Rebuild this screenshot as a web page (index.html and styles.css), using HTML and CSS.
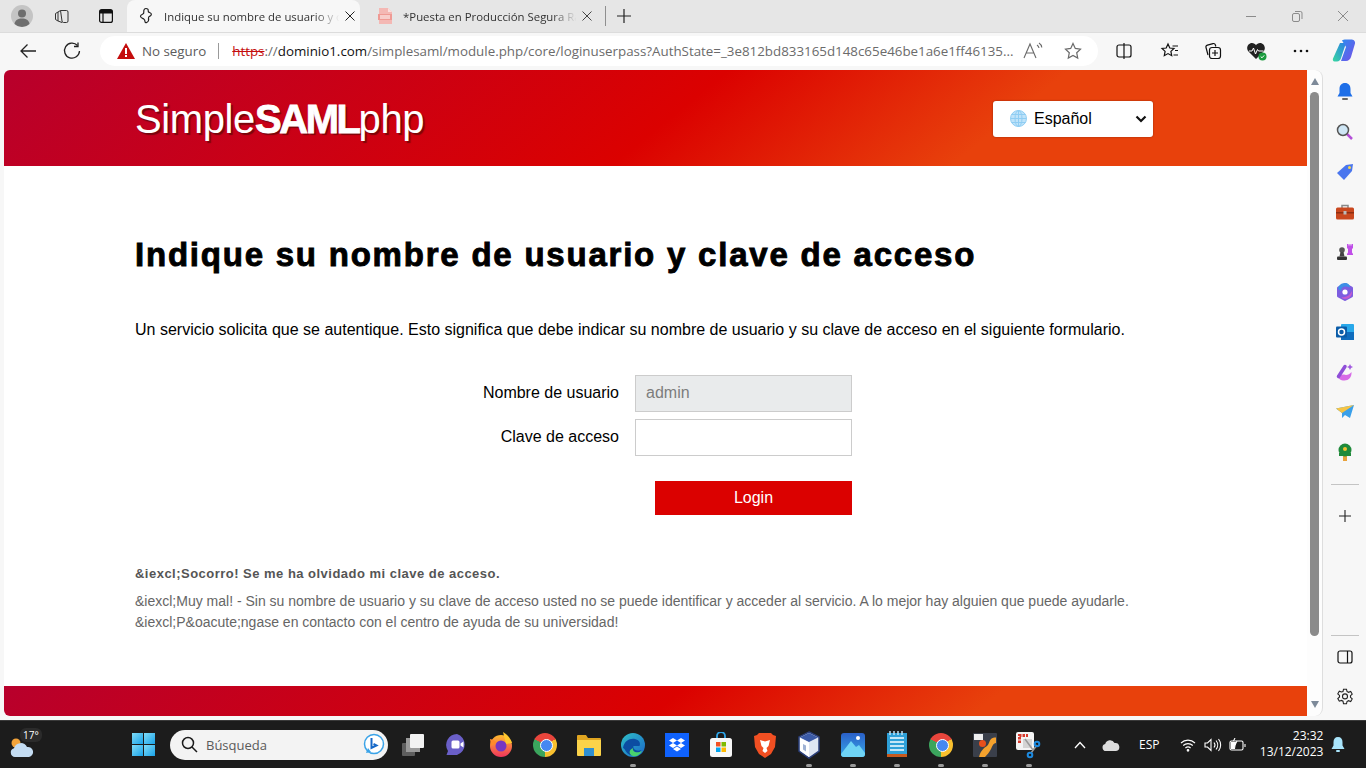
FILE: index.html
```html
<!DOCTYPE html>
<html lang="es">

<head>
    <meta charset="UTF-8">
    <title>Indique su nombre de usuario y clave de acceso</title>
    <link rel="stylesheet" href="styles.css">
</head>

<body>

    <!-- tab strip -->
    <div class="tabstrip">
        <div class="avatar"><svg width="22" height="22" viewBox="0 0 22 22"><circle cx="11" cy="11" r="11" fill="#c4c4c4"/><circle cx="11" cy="8.5" r="4" fill="#6e6e6e"/><path d="M3.5 19c.6-4 3.500-5.500 7.500-5.500s6.900 1.500 7.500 5.500a11 11 0 0 1-15 0z" fill="#6e6e6e"/></svg></div>
        <div class="strip-btn"><svg width="18" height="18" viewBox="0 0 18 18" fill="none" stroke="#333"><path d="M7.500 3.500h6a1.500 1.500 0 0 1 1.500 1.500v9a1.500 1.500 0 0 1-1.500 1.500h-3a1.500 1.500 0 0 1-1.500-1.500z"/><path d="M7.500 3.500 5 5v9l4 1.500M5 5 2.500 6.500v6L5 14"/></svg></div>
        <div class="strip-btn"><svg width="16" height="16" viewBox="0 0 16 16" fill="none" stroke="#111" stroke-width="1.200"><rect x="1.600" y="1.600" width="12.800" height="12.800" rx="2"/><path d="M1.600 5h12.800M5 5v9.400" /><rect x="2" y="2" width="12" height="3" fill="#111" stroke="none"/></svg></div>
        <div class="tab tab-active">
            <svg width="16" height="18" viewBox="0 0 16 18" fill="none" stroke="#222" stroke-width="1.200"><path d="M8 1.500c1.500 0 2.500 1 2.200 2.500-.2 1 .8 1.500 1.800 1.800 1.500.5 1.800 2.200.5 3-1 .6-2.300.9-2 2.200.4 1.700.2 3.500-1.800 4.500-1 .5-1.700 0-1.700-1 0-1.300-.5-2-1.500-2.700-1-.6-2.700-.8-3-2.300-.2-1.200 1-1.900 2-2.300 1-.4 1.500-1 1.300-2.200C5.500 3 6.500 1.500 8 1.500z"/></svg>
            <span class="tab-title">Indique su nombre de usuario y c</span>
            <svg class="tab-close" width="10" height="10" viewBox="0 0 10 10" stroke="#222"><path d="M.5.5l9 9M9.500.5l-9 9"/></svg>
        </div>
        <div class="tab tab-pdf">
            <svg width="16" height="18" viewBox="0 0 16 18"><path d="M2 1h9l4 4v12H2z" fill="#f4b8b4"/><path d="M11 1v4h4z" fill="#fbe0de"/><rect x="1" y="7" width="14" height="6" fill="#ef9a94"/><rect x="3" y="8.500" width="10" height="1" fill="#fff"/><rect x="3" y="10.500" width="10" height="1" fill="#fff"/></svg>
            <span class="tab-title">*Puesta en Producción Segura Ra</span>
            <svg class="tab-close" width="10" height="10" viewBox="0 0 10 10" stroke="#444"><path d="M.5.5l9 9M9.500.5l-9 9"/></svg>
        </div>
        <div class="tab-sep"></div>
        <div class="new-tab"><svg width="16" height="16" viewBox="0 0 16 16" stroke="#222" stroke-width="1.200"><path d="M8 1v14M1 8h14"/></svg></div>
        <div class="win-controls">
            <svg width="14" height="14" viewBox="0 0 14 14" stroke="#8b8b8b"><path d="M2 7.500h10"/></svg>
            <svg width="14" height="14" viewBox="0 0 14 14" stroke="#8b8b8b" fill="none"><rect x="2.500" y="4.500" width="7" height="8" rx="1.500"/><path d="M5 2.500h5.500a1.500 1.500 0 0 1 1.500 1.500v6"/></svg>
            <svg width="14" height="14" viewBox="0 0 14 14" stroke="#8b8b8b"><path d="M2 2l10 10M12 2 2 12"/></svg>
        </div>
    </div>

    <!-- address bar -->
    <div class="toolbar">
        <div class="nav-btn"><svg width="20" height="20" viewBox="0 0 20 20" fill="none" stroke="#222" stroke-width="1.300"><path d="M18 10H3M9.500 3.500 3 10l6.500 6.500"/></svg></div>
        <div class="nav-btn"><svg width="20" height="20" viewBox="0 0 20 20" fill="none" stroke="#222" stroke-width="1.300"><path d="M15.500 4.500A7.500 7.500 0 1 0 17.500 10"/><path d="M16 1.500v4h-4"/></svg></div>
        <div class="urlbar">
            <svg class="warn" width="18" height="16" viewBox="0 0 18 16"><path d="M9 0 18 16H0z" fill="#c40d0d"/><rect x="8" y="5" width="2" height="6" fill="#fff"/><rect x="8" y="12" width="2" height="2" fill="#fff"/></svg>
            <span class="not-secure">No seguro</span>
            <span class="url-sep"></span>
            <span class="url"><span class="url-https">https</span>://<span class="url-host">dominio1.com</span>/simplesaml/module.php/core/loginuserpass?AuthState=_3e812bd833165d148c65e46be1a6e1ff46135...</span>
            <svg class="read" width="24" height="20" viewBox="0 0 24 20" fill="none" stroke="#6a6a6a" stroke-width="1.100"><path d="M2 17 8 3l6 14M4.500 12h7"/><path d="M15 4c1.200.8 1.800 1.800 2 3M17 2c1.600 1 2.600 2.600 2.800 4.500"/></svg>
            <svg class="star" width="18" height="18" viewBox="0 0 18 18" fill="none" stroke="#6a6a6a" stroke-width="1.200"><path d="M9 1.500l2.300 4.900 5.200.7-3.800 3.600 1 5.300L9 13.400 4.300 16l1-5.300L1.500 7.100l5.200-.7z"/></svg>
        </div>
        <div class="tool-icons">
            <div class="tool"><svg width="18" height="18" viewBox="0 0 18 18" fill="none" stroke="#111" stroke-width="1.200"><rect x="2" y="3" width="14" height="12" rx="2"/><path d="M9 1v16"/></svg></div>
            <div class="tool"><svg width="20" height="20" viewBox="0 0 20 20" fill="none" stroke="#111" stroke-width="1.200"><path d="M8 3l1.800 4 4.200.5-3.100 2.900.8 4.300L8 12.600l-3.700 2.100.8-4.300L2 7.500 6.200 7z"/><path d="M12.500 5H18M15 9.500h3M13.500 14H18"/></svg></div>
            <div class="tool"><svg width="20" height="20" viewBox="0 0 20 20" fill="none" stroke="#111" stroke-width="1.200"><path d="M5 14 3 6.500a2 2 0 0 1 1.400-2.400L10 2.600a2 2 0 0 1 2.400 1.400l.4 1.500"/><rect x="6.500" y="6.500" width="11" height="11" rx="2.500"/><path d="M12 9v6M9 12h6"/></svg></div>
            <div class="tool"><svg width="22" height="20" viewBox="0 0 22 20"><path d="M10 18 2.500 10.500C-.5 7 2 2 6 2c1.800 0 3.200 1 4 2.200C10.800 3 12.200 2 14 2c4 0 6.500 5 3.500 8.500z" fill="#222"/><path d="M3 10h3l1.500-3 2 6 2-4.500 1 1.500h5" fill="none" stroke="#fff"/><circle cx="16.500" cy="15.500" r="4" fill="#1c9b3f"/><path d="M14.700 15.500l1.300 1.300 2.200-2.400" fill="none" stroke="#fff"/></svg></div>
            <div class="tool"><svg width="16" height="4" viewBox="0 0 16 4" fill="#111"><circle cx="2" cy="2" r="1.300"/><circle cx="8" cy="2" r="1.300"/><circle cx="14" cy="2" r="1.300"/></svg></div>
            <div class="tool"><svg width="24" height="24" viewBox="0 0 24 24"><defs><linearGradient id="cop1" x1="0" y1="1" x2="1" y2="0"><stop offset="0" stop-color="#37d8a0"/><stop offset="1" stop-color="#2a7de8"/></linearGradient><linearGradient id="cop2" x1="0" y1="0" x2="1" y2="1"><stop offset="0" stop-color="#2b8df0"/><stop offset="1" stop-color="#7a4de8"/></linearGradient></defs><path d="M8 1h6l-5 15c-.6 2-2 3.500-4 3.500H2.500C1 19.500.5 18 1 16.500z" fill="url(#cop1)" transform="translate(0 3)"/><path d="M10 1.500C11 .5 12 .5 14 .5h5c2.500 0 4.500 1.500 4 4L19 18c-.6 2-2.500 4-5 4h-5l5-14z" fill="url(#cop2)"/></svg></div>
        </div>
    </div>

    <div class="browser-body">
        <!-- page content -->
        <div class="page">
            <div class="site-header">
                <div class="logo">Simple<b>SAML</b>php</div>
                <div class="lang-select">
                    <svg width="17" height="17" viewBox="0 0 17 17" fill="none" stroke="#8fcdf3"><circle cx="8.500" cy="8.500" r="8" fill="#bfe3f9"/><ellipse cx="8.500" cy="8.500" rx="3.500" ry="8"/><path d="M.5 8.500h16M1.500 4.500h14M1.500 12.500h14M8.500.5v16"/></svg>
                    <span class="lang-name">Español</span>
                    <svg class="chev" width="12" height="8" viewBox="0 0 12 8" fill="none" stroke="#111" stroke-width="2.200"><path d="M1.500 1.500 6 6l4.500-4.500"/></svg>
                </div>
            </div>

            <div class="content">
                <h1>Indique su nombre de usuario y clave de acceso</h1>
                <p class="intro">Un servicio solicita que se autentique. Esto significa que debe indicar su nombre de usuario y su clave de acceso en el siguiente formulario.</p>

                <form class="login-form">
                    <label for="username">Nombre de usuario</label>
                    <input id="username" class="field field-disabled" value="admin" disabled>
                    <label for="password">Clave de acceso</label>
                    <input id="password" class="field" type="password">
                    <button type="button" class="login-btn">Login</button>
                </form>

                <h2>&amp;iexcl;Socorro! Se me ha olvidado mi clave de acceso.</h2>
                <p class="help">&amp;iexcl;Muy mal! - Sin su nombre de usuario y su clave de acceso usted no se puede identificar y acceder al servicio. A lo mejor hay alguien que puede ayudarle. &amp;iexcl;P&amp;oacute;ngase en contacto con el centro de ayuda de su universidad!</p>
            </div>

            <div class="site-footer"></div>
        </div>

        <!-- scrollbar -->
        <div class="scrollbar">
            <span class="arrow arrow-up"></span>
            <div class="thumb"></div>
            <span class="arrow arrow-down"></span>
        </div>

        <!-- edge sidebar -->
        <div class="sidebar">
            <div class="side-icon"><svg width="18" height="20" viewBox="0 0 18 20"><path d="M9 1c-3.500 0-5.500 2.500-5.500 6v4L1.500 14.500h15L14.500 11V7C14.500 3.500 12.500 1 9 1z" fill="#1e6fe8"/><rect x="6" y="16" width="6" height="2" rx="1" fill="#666"/></svg></div>
            <div class="side-icon"><svg width="18" height="18" viewBox="0 0 18 18"><path d="M10.500 10.500 16 16" stroke="#b44fd8" stroke-width="2.500"/><circle cx="7" cy="7" r="5.500" fill="#cfe6f5" stroke="#555" stroke-width="1.500"/></svg></div>
            <div class="side-icon"><svg width="18" height="18" viewBox="0 0 18 18"><path d="M1 10 10 2l7-1-1 7-8 9z" fill="#4a76ee"/><circle cx="13.500" cy="4.500" r="1.500" fill="#f7d64a"/></svg></div>
            <div class="side-icon"><svg width="18" height="16" viewBox="0 0 18 16"><path d="M6 4V1.500h6V4" fill="none" stroke="#888" stroke-width="1.500"/><rect y="3.500" width="18" height="12" rx="1.500" fill="#c9481f"/><rect y="8" width="18" height="1.500" fill="#8f2f12"/><rect x="7.500" y="7" width="3" height="3.500" fill="#bbb"/></svg></div>
            <div class="side-icon"><svg width="18" height="18" viewBox="0 0 18 18"><circle cx="6" cy="7" r="2.800" fill="#555"/><path d="M4.500 9h3l1 4.500h-5z" fill="#444"/><rect x="1" y="13.500" width="10" height="3.500" rx="1" fill="#333"/><path d="M11 1h1.500v1.500h1V1h1v1.500h1V1H17v4l-1 1v3.500l1 1.500v1h-6v-1l1-1.500V6l-1-1z" fill="#c04fe8"/></svg></div>
            <div class="side-icon"><svg width="18" height="18" viewBox="0 0 18 18"><path d="M9 1.500 15.500 5v8L9 16.500 2.500 13V5z" fill="#7d5de0" stroke="#7d5de0" stroke-linejoin="round" stroke-width="3"/><path d="M9 0c3 0 5 2 5 4.500-2-1-3-1-5-1S5 5 5 8L2 6c0-3 3-6 7-6z" fill="#3d8fe6"/><path d="M16 8c.5 4-2 8-7 8-2 0-3-1-3.500-2 4 1 8-1 10.500-6z" fill="#c45ad0"/><circle cx="9" cy="9" r="2.600" fill="#fff"/></svg></div>
            <div class="side-icon"><svg width="18" height="18" viewBox="0 0 18 18"><rect x="5" y="1" width="13" height="16" rx="1" fill="#28a8ea"/><path d="M5 9h13v8H5z" fill="#0f6cbd"/><rect y="3.500" width="11" height="11" rx="1" fill="#0a5ca8"/><circle cx="5.500" cy="9" r="3" fill="none" stroke="#fff" stroke-width="1.500"/></svg></div>
            <div class="side-icon"><svg width="18" height="18" viewBox="0 0 18 18"><path d="M1.500 12c0 3.500 3 5.500 7 5.500s7.500-3.500 7-8.500c-2 2.500-5 3.500-7.500 2.500z" fill="#d76be6"/><path d="M2.500 13.500 9 3.500" stroke="#8f4fd8" stroke-width="3.500" stroke-linecap="round"/><path d="M14 1l1 2 2 1-2 1-1 2-1-2-2-1 2-1z" fill="#a35be0"/></svg></div>
            <div class="side-icon"><svg width="18" height="14" viewBox="0 0 18 14"><path d="M0 3.500 18 0l-4 13-5-3-3 3V8z" fill="#3aa0ea"/><path d="M0 3.500 18 0 6 8z" fill="#f6c445"/></svg></div>
            <div class="side-icon"><svg width="16" height="18" viewBox="0 0 16 18"><rect x="6" y="11" width="4" height="7" fill="#e9a23b"/><circle cx="8" cy="7" r="6.500" fill="#1f8a3a"/><path d="M2 10h12v3H2z" fill="#1f8a3a"/><circle cx="8" cy="6" r="2" fill="#f2c230"/></svg></div>
            <div class="side-sep side-sep-first"></div>
            <div class="side-icon"><svg width="14" height="14" viewBox="0 0 14 14" stroke="#222" stroke-width="1.100"><path d="M7 1v12M1 7h12"/></svg></div>
            <div class="side-spacer"></div>
            <div class="side-sep side-sep-last"></div>
            <div class="side-icon"><svg width="16" height="14" viewBox="0 0 16 14" fill="none" stroke="#111" stroke-width="1.200"><rect x="1" y="1" width="14" height="12" rx="2"/><path d="M10.500 1v12"/></svg></div>
            <div class="side-icon"><svg width="18" height="18" viewBox="0 0 18 18" fill="none" stroke="#222" stroke-width="1.100"><path d="M7.500 1.200h3l.5 2.300 1.500.8 2.200-.8 1.500 2.600-1.700 1.600v1.600l1.700 1.600-1.500 2.600-2.200-.8-1.500.8-.5 2.300h-3L7 13.200l-1.500-.8-2.200.8-1.500-2.600 1.700-1.600V7.400L1.800 5.800l1.500-2.600 2.200.8L7 3.500z"/><circle cx="9" cy="8.400" r="2.500"/></svg></div>
        </div>
    </div>

    <!-- windows taskbar -->
    <div class="taskbar">
        <div class="weather">
            <svg width="26" height="22" viewBox="0 0 26 22"><circle cx="7" cy="6" r="4.500" fill="#f2a33a"/><path d="M6 20a4.500 4.500 0 0 1-1-8.800A7 7 0 0 1 18 10a5 5 0 0 1 2 10z" fill="#c4dcf2"/></svg>
            <span class="temp">17°</span>
        </div>
        <div class="start"><span></span><span></span><span></span><span></span></div>
        <div class="search">
            <svg width="17" height="17" viewBox="0 0 17 17" fill="none" stroke="#1a1a1a" stroke-width="1.500"><circle cx="7" cy="7" r="5.500"/><path d="M11 11l5 5"/></svg>
            <span class="search-text">Búsqueda</span>
            <svg class="bing" width="22" height="24" viewBox="0 0 22 24"><circle cx="11" cy="11" r="9.500" fill="#fff" stroke="#3aa3e8" stroke-width="1.500"/><path d="M3 20l2-5 3 4z" fill="#3aa3e8"/><path d="M8.500 5v10l5-2.500-3-1.500" fill="none" stroke="#1668c8" stroke-width="2"/></svg>
        </div>
        <div class="apps">
            <div class="app"><svg width="24" height="24" viewBox="0 0 24 24"><rect x="1" y="10" width="13" height="13" rx="1" fill="#5e5e5e"/><rect x="5" y="5" width="14" height="14" fill="#9a9a9a"/><rect x="9" y="1" width="14" height="14" rx="1" fill="#f2f2f2"/></svg></div>
            <div class="app"><svg width="24" height="24" viewBox="0 0 24 24"><path d="M12 1a11 11 0 0 1 0 21H1.500l1.500-4A11 11 0 0 1 12 1z" fill="#6a5fc8"/><rect x="6.500" y="7.500" width="8" height="8" rx="1.500" fill="#fff"/><path d="M15.500 10.500l3-2v6l-3-2z" fill="#fff"/></svg></div>
            <div class="app"><svg width="24" height="26" viewBox="0 0 24 26"><defs><linearGradient id="ffx" x1="0" y1="0" x2="0" y2="1"><stop offset="0" stop-color="#ffbb2e"/><stop offset="1" stop-color="#f0345c"/></linearGradient></defs><circle cx="12" cy="14" r="11" fill="url(#ffx)"/><path d="M14 0c5 3 8 7 9 11l-6 1z" fill="#ffc72e"/><path d="M1 7l4 1 3 3-6 3z" fill="#ff8a2b"/><circle cx="12" cy="14" r="5.500" fill="#7636c4"/></svg></div>
            <div class="app"><div class="chrome"></div></div>
            <div class="app"><svg width="24" height="24" viewBox="0 0 24 24"><path d="M0 3a1 1 0 0 1 1-1h8l2 3h12a1 1 0 0 1 1 1v2H0z" fill="#e0a520"/><path d="M0 7h24v15a1 1 0 0 1-1 1H1a1 1 0 0 1-1-1z" fill="#fbd34a"/><rect x="7" y="15" width="10" height="8" fill="#2f8fd0"/></svg></div>
            <div class="app has-dot"><svg width="24" height="24" viewBox="0 0 24 24"><defs><linearGradient id="edg" x1="0" y1="0" x2="1" y2="1"><stop offset="0" stop-color="#2fc0c8"/><stop offset="1" stop-color="#1a66c8"/></linearGradient></defs><circle cx="12" cy="12" r="12" fill="url(#edg)"/><path d="M2 15C3 8 9 5 14 6c4 1 6 4 4.500 7h-6c-1 3 3 6 8 4-3 5-9 7-13 4-3-2-4-6-5.500-6z" fill="#0c4da2"/><path d="M12 15c-1 3 3 6 9 3-2 4-6 6-9 5-4-1-5-6 0-8z" fill="#49d26d"/></svg></div>
            <div class="app"><svg width="24" height="24" viewBox="0 0 24 24"><rect width="24" height="24" fill="#0f62fe"/><path d="M8 5l4 2.500L8 10 4 7.500zM16 5l4 2.500L16 10l-4-2.500zM8 10l4 2.500L8 15l-4-2.500zM16 10l4 2.500L16 15l-4-2.500zM8 16l4-2.500 4 2.500-4 2.500z" fill="#fff"/></svg></div>
            <div class="app"><svg width="24" height="26" viewBox="0 0 24 26"><path d="M8 7V4a4 4 0 0 1 8 0v3" fill="none" stroke="#2ea5e8" stroke-width="1.800"/><rect x="1" y="6" width="22" height="19" rx="2.500" fill="#f7f7f7"/><rect x="7" y="10" width="4.500" height="4.500" fill="#f25022"/><rect x="12.500" y="10" width="4.500" height="4.500" fill="#7fba00"/><rect x="7" y="15.500" width="4.500" height="4.500" fill="#00a4ef"/><rect x="12.500" y="15.500" width="4.500" height="4.500" fill="#ffb900"/></svg></div>
            <div class="app"><svg width="22" height="26" viewBox="0 0 22 26"><path d="M5 1h12l2 2 3 1-1 11-4 7-6 4-6-4-4-7L0 4l3-1z" fill="#f14f22"/><path d="M6 8l5 1.500L16 8l-1.500 6-2 2 1 3-2.500 2-2.500-2 1-3-2-2z" fill="#fff"/></svg></div>
            <div class="app has-dot"><svg width="24" height="28" viewBox="0 0 24 28"><path d="M12 1l10 5v14l-10 7-10-7V6z" fill="#dfe6f2" stroke="#2b3f7a" stroke-width="1.500"/><path d="M12 2l9 4.500-9 4.500-9-4.500z" fill="#3b5aa6"/><path d="M3 7l9 4.500V26l-9-6.500z" fill="#fff"/><path d="M6 13l3 1.500v6l-3-2z" fill="#9fb2d4"/></svg></div>
            <div class="app has-dot"><svg width="24" height="26" viewBox="0 0 24 26"><defs><linearGradient id="pho" x1="0" y1="0" x2="0" y2="1"><stop offset="0" stop-color="#2a5fc8"/><stop offset="1" stop-color="#37a8e8"/></linearGradient></defs><rect y="1" width="24" height="24" rx="3" fill="url(#pho)"/><path d="M0 22 10 9l5 6 3-2 6 8v1a3 3 0 0 1-3 3H3a3 3 0 0 1-3-3z" fill="#6fd4f5"/><circle cx="17" cy="6" r="2" fill="#fff"/></svg></div>
            <div class="app has-dot"><svg width="20" height="28" viewBox="0 0 20 28"><rect y="2" width="20" height="24" fill="#2ea0d8"/><rect y="23" width="20" height="3" fill="#c85a1e"/><path d="M3 7h14M3 11h14M3 15h14M3 19h14" stroke="#c4e6f6" stroke-width="2"/><path d="M3 0v4M7 0v4M11 0v4M15 0v4" stroke="#bfe0f2" stroke-width="1.500"/></svg></div>
            <div class="app has-dot"><div class="chrome"></div></div>
            <div class="app has-dot"><svg width="24" height="24" viewBox="0 0 24 24"><rect width="24" height="24" rx="1" fill="#3a3f4a"/><path d="M6 24c2-7 5-9 8-11 2-1.500 2-5 4-7 1.500-1.500 3-1.500 5-1.500V10c-3 .5-3.500 3-5 6-1.500 3-4 6-6 8z" fill="#f5a22d"/><circle cx="9.500" cy="10.500" r="3.500" fill="#e8501c"/><rect x="1" y="1" width="9" height="6" fill="#eee"/></svg></div>
            <div class="app has-dot"><svg width="28" height="28" viewBox="0 0 28 28"><rect x="1" y="1" width="18" height="18" rx="2" fill="#f4f4f4"/><path d="M4.500 12V4.500H13" fill="none" stroke="#d83a2c" stroke-width="3" stroke-dasharray="2.500 1"/><rect x="8" y="8" width="9" height="9" fill="#d4d4d4"/><path d="M10 8l8 11M22 14l-6 8" stroke="#9a9a9a" stroke-width="1.500"/><circle cx="22" cy="13" r="2.300" fill="none" stroke="#1d8ae0" stroke-width="2"/><circle cx="15" cy="24" r="2.300" fill="none" stroke="#1d8ae0" stroke-width="2"/></svg></div>
        </div>
        <div class="tray">
            <svg class="tray-up" width="12" height="8" viewBox="0 0 12 8" fill="none" stroke="#fff" stroke-width="1.300"><path d="M1 7l5-5.500L11 7"/></svg>
            <svg class="tray-cloud" width="18" height="12" viewBox="0 0 18 12"><path d="M4 12a3.500 3.500 0 0 1-.8-6.900A5 5 0 0 1 12.500 4 4 4 0 0 1 14 12z" fill="#dcdcdc"/></svg>
            <span class="tray-lang">ESP</span>
            <svg class="tray-wifi" width="16" height="14" viewBox="0 0 16 14" fill="none" stroke="#fff" stroke-width="1.100"><path d="M1 5a10 10 0 0 1 14 0M3.200 7.500a7 7 0 0 1 9.600 0M5.400 10a4 4 0 0 1 5.200 0"/><circle cx="8" cy="12.300" r=".8" fill="#fff"/></svg>
            <svg class="tray-vol" width="18" height="14" viewBox="0 0 18 14" fill="none" stroke="#fff" stroke-width="1.100"><path d="M1 5v4h2.500L7 12.500v-11L3.500 5z"/><path d="M10 4.500a4 4 0 0 1 0 5M12 2.500a7 7 0 0 1 0 9M14.500 1a9.500 9.500 0 0 1 0 12"/></svg>
            <svg class="tray-bat" width="18" height="14" viewBox="0 0 18 14" fill="none" stroke="#fff" stroke-width="1.100"><rect x="1" y="3" width="13" height="9" rx="1.500"/><path d="M16 6v3"/><path d="M2.500 4.500h4l-1 6h-3z" fill="#fff"/><path d="M6 0 4.500 3M8 3 6 7" /></svg>
            <div class="clock"><span>23:32</span><span>13/12/2023</span></div>
            <svg class="tray-bell" width="14" height="16" viewBox="0 0 14 16"><path d="M7 0C4 0 2.500 2 2.500 5v3.500L.5 12h13l-2-3.500V5C11.500 2 10 0 7 0z" fill="#a9e4fb"/><rect x="5" y="13" width="4" height="2" rx="1" fill="#a9e4fb"/></svg>
        </div>
    </div>

</body>

</html>
```

FILE: styles.css
```css
* {
    box-sizing: border-box;
    margin: 0;
    padding: 0;
}

html,
body {
    width: 1366px;
    height: 768px;
    overflow: hidden;
}

body {
    display: flex;
    flex-direction: column;
    background-color: #f7f7f7;
    font-family: 'Liberation Sans', Arial, sans-serif;
}

/* Tab strip */
.tabstrip {
    display: flex;
    align-items: center;
    height: 32px;
    background-color: #e6e6e6;
    font-family: 'Open Sans', sans-serif;
    font-size: 11.400px;
    color: #333;
}

.avatar {
    display: flex;
    margin-left: 11px;
    width: 22px;
}

.strip-btn {
    display: flex;
    justify-content: center;
    width: 44px;
    margin-left: 7px;
}

.strip-btn + .strip-btn {
    margin-left: 0;
    margin-right: -1px;
}

.tab {
    display: flex;
    align-items: center;
    width: 233px;
    height: 32px;
    padding: 0 1px 0 11px;
    border-radius: 8px 8px 0 0;
}

.tab-active {
    background-color: #f7f7f7;
}

.tab-pdf {
    width: 239px;
    margin-left: 6px;
    padding-right: 9px;
}

.tab-title {
    flex: 1;
    margin-left: 10px;
    overflow: hidden;
    white-space: nowrap;
    -webkit-mask-image: linear-gradient(to right, #000 84%, transparent 98%);
    mask-image: linear-gradient(to right, #000 84%, transparent 98%);
}

.tab-close {
    flex-shrink: 0;
    margin: 0 4px 0 2px;
}

.tab-sep {
    width: 1px;
    height: 20px;
    background-color: #8f8f8f;
}

.new-tab {
    display: flex;
    margin-left: 10px;
}

.win-controls {
    display: flex;
    gap: 32px;
    margin-left: auto;
    margin-right: 16px;
}

/* Address bar */
.toolbar {
    display: flex;
    align-items: center;
    height: 38px;
    padding-bottom: 1px;
    background-color: #f7f7f7;
    border-top: 1px solid #dcdcdc;
}

.nav-btn {
    display: flex;
    justify-content: center;
    width: 44px;
    margin-left: 6px;
}

.nav-btn + .nav-btn {
    margin-left: 0;
}

.urlbar {
    display: flex;
    align-items: center;
    width: 999px;
    height: 30px;
    margin-left: 6px;
    padding-left: 17px;
    background-color: #fff;
    border-radius: 15px;
    font-family: 'Open Sans', sans-serif;
    font-size: 13.350px;
    white-space: nowrap;
}

.not-secure {
    margin-left: 7px;
    color: #5c5c5c;
}

.url-sep {
    width: 1px;
    height: 16px;
    margin: 0 13px 0 12px;
    background-color: #9a9a9a;
}

.url {
    width: 782px;
    color: #6b6b6b;
}

.url-https {
    color: #c40d0d;
    text-decoration: line-through;
}

.url-host {
    color: #111;
}

.read {
    margin-left: 8px;
}

.star {
    margin-left: 18px;
}

.tool-icons {
    display: flex;
    margin-left: 4px;
}

.tool {
    display: flex;
    justify-content: center;
    align-items: center;
    width: 44px;
    height: 30px;
}

.tool:nth-child(2) {
    margin-left: 2px;
}

.tool:nth-child(3) {
    margin-left: -1px;
}

.tool:last-child {
    margin-left: -1px;
}

/* Main area */
.browser-body {
    display: flex;
    height: 646px;
}

.page {
    display: flex;
    flex-direction: column;
    width: 1303px;
    margin-left: 4px;
    background-color: #fff;
    border-radius: 6px 0 0 6px;
    overflow: hidden;
}

.site-header {
    display: flex;
    justify-content: space-between;
    align-items: center;
    flex-shrink: 0;
    height: 96px;
    padding: 0 154px 0 131px;
    background: linear-gradient(141deg, #b8002c 0%, #db0100 51%, #e8410c 75%);
}

.logo {
    padding-top: 2px;
    font-size: 40px;
    letter-spacing: -0.400px;
    color: #fff;
    text-shadow: 2px 2px 1px rgba(60, 10, 0, 0.55);
}

.logo b {
    letter-spacing: -2.400px;
    -webkit-text-stroke: 0.800px #fff;
}

.lang-select {
    display: flex;
    align-items: center;
    width: 160px;
    height: 36px;
    margin-top: 1px;
    padding: 0 6px 0 17px;
    background-color: #fff;
    border-radius: 3px;
    box-shadow: 0 0 2px rgba(0, 0, 0, 0.4);
    font-size: 16px;
    color: #000;
}

.lang-name {
    margin-left: 7px;
}

.chev {
    margin-left: auto;
}

.content {
    flex: 1;
    padding: 70px 154px 0 131px;
}

h1 {
    font-size: 33px;
    line-height: 38px;
    letter-spacing: 1.780px;
    color: #000;
    -webkit-text-stroke: 0.900px #000;
}

.intro {
    margin-top: 44px;
    font-size: 16px;
    line-height: 24px;
    white-space: nowrap;
    color: #000;
}

.login-form {
    display: grid;
    grid-template-columns: 484px 217px;
    column-gap: 16px;
    row-gap: 7px;
    align-items: center;
    margin-top: 33px;
}

.login-form label {
    padding-bottom: 1px;
    font-size: 16px;
    text-align: right;
    color: #000;
}

.field {
    width: 217px;
    height: 37px;
    padding: 0 10px 1px;
    border: 1px solid #ccc;
    background-color: #fff;
    font-family: 'Liberation Sans', Arial, sans-serif;
    font-size: 16px;
}

.field-disabled {
    background-color: #e9ebec;
    color: #7d7d7d;
}

.login-btn {
    grid-column: 2;
    width: 197px;
    height: 34px;
    margin: 18px 0 0 20px;
    border: none;
    background-color: #db0100;
    color: #fff;
    font-family: 'Liberation Sans', Arial, sans-serif;
    font-size: 16px;
}

h2 {
    margin-top: 51px;
    font-size: 13px;
    line-height: 16px;
    letter-spacing: 0.480px;
    color: #555;
}

.help {
    margin-top: 9px;
    font-size: 14px;
    line-height: 21px;
    color: #666;
}

.site-footer {
    flex-shrink: 0;
    height: 30px;
    background: linear-gradient(141deg, #b8002c 0%, #db0100 51%, #e8410c 75%);
}

/* Scrollbar */
.scrollbar {
    display: flex;
    flex-direction: column;
    align-items: center;
    width: 16px;
    background-color: #fdfdfd;
    border-right: 1px solid #dedede;
    border-radius: 0 8px 8px 0;
}

.thumb {
    width: 9px;
    height: 544px;
    margin: 7px 0 0;
    border-radius: 5px;
    background-color: #8b8b8b;
}

.arrow {
    width: 0;
    height: 0;
    border-left: 4.500px solid transparent;
    border-right: 4.500px solid transparent;
}

.arrow-up {
    margin-top: 8px;
    border-bottom: 7px solid #7d8a99;
}

.arrow-down {
    margin-top: auto;
    margin-bottom: 8px;
    border-top: 7px solid #7d8a99;
}

/* Sidebar */
.sidebar {
    display: flex;
    flex-direction: column;
    align-items: center;
    width: 43px;
    height: 647px;
    padding-top: 2px;
}

.side-icon {
    display: flex;
    justify-content: center;
    align-items: center;
    flex-shrink: 0;
    width: 100%;
    height: 40px;
}

.side-sep {
    flex-shrink: 0;
    width: 28px;
    height: 1px;
    background-color: #c4c4c4;
}

.side-sep-first {
    margin-top: 12px;
    margin-bottom: 11px;
}

.side-sep-last {
    margin-bottom: 1px;
}

.side-spacer {
    flex: 1;
}

/* Taskbar */
.taskbar {
    display: flex;
    align-items: center;
    height: 48px;
    margin-top: 4px;
    background-color: #1c1c1c;
    border-top: 1px solid #3a3a3a;
    color: #fff;
    font-family: 'Open Sans', sans-serif;
}

.weather {
    position: relative;
    display: flex;
    width: 132px;
    padding: 6px 0 0 9px;
}

.temp {
    position: absolute;
    top: -3px;
    left: 20px;
    padding: 0 3px;
    border-radius: 6px;
    background-color: #2b2b2b;
    font-size: 10px;
}

.start {
    display: grid;
    grid-template-columns: 11px 11px;
    gap: 1px;
    width: 23px;
}

.start span {
    height: 11px;
    background: linear-gradient(135deg, #7fdcf8, #19a2e8);
}

.search {
    display: flex;
    align-items: center;
    width: 218px;
    height: 30px;
    margin-left: 15px;
    padding: 0 3px 0 11px;
    border-radius: 15px;
    background-color: #f3f3f3;
}

.search-text {
    margin-left: 8px;
    font-size: 13px;
    color: #5a5a5a;
}

.bing {
    margin-left: auto;
}

.apps {
    display: flex;
    margin-left: 3px;
}

.app {
    position: relative;
    display: flex;
    justify-content: center;
    align-items: center;
    width: 44px;
    height: 47px;
}

.has-dot::after {
    content: "";
    position: absolute;
    bottom: 1px;
    left: 19px;
    width: 6px;
    height: 3px;
    border-radius: 2px;
    background-color: #9a9a9a;
}

.chrome {
    position: relative;
    width: 24px;
    height: 24px;
    border-radius: 50%;
    background: conic-gradient(from -60deg, #e8453c 0 120deg, #f9c02e 120deg 240deg, #3ba55d 240deg 360deg);
}

.chrome::after {
    content: "";
    position: absolute;
    top: 6.500px;
    left: 6.500px;
    width: 11px;
    height: 11px;
    border: 1.500px solid #fff;
    border-radius: 50%;
    background-color: #4688f1;
}

.tray {
    display: flex;
    align-items: center;
    flex: 1;
    height: 47px;
    font-size: 11px;
}

.tray-up {
    margin-left: 23px;
}

.tray-cloud {
    margin-left: 16px;
}

.tray-lang {
    margin-left: 19px;
    font-size: 12px;
}

.tray-wifi {
    margin-left: 21px;
}

.tray-vol {
    margin-left: 8px;
}

.tray-bat {
    margin-left: 7px;
}

.clock {
    display: flex;
    flex-direction: column;
    align-items: flex-end;
    width: 76px;
    line-height: 16px;
    margin-bottom: 2px;
    font-size: 12px;
}

.tray-bell {
    margin-left: 8px;
}
```
